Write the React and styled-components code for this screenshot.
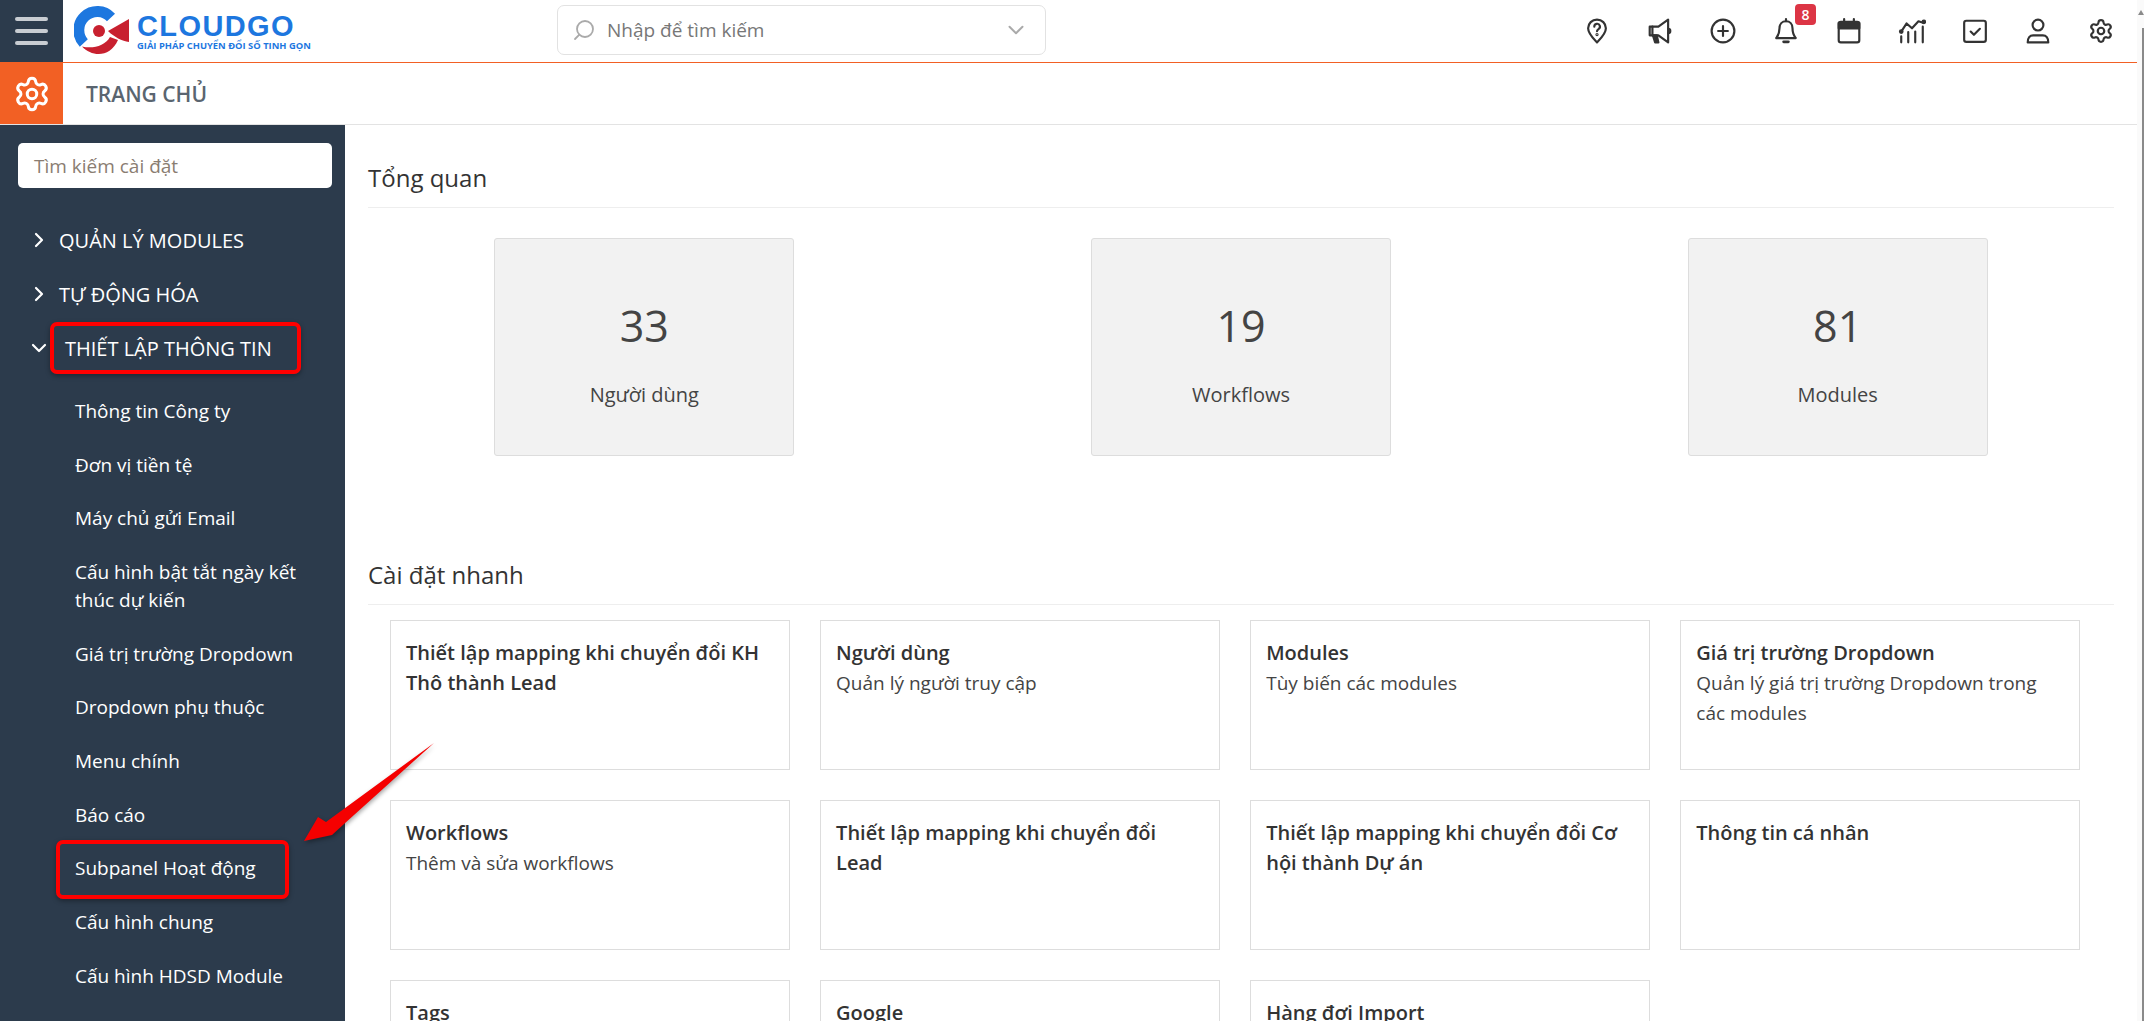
import React from "react";
import styled, { createGlobalStyle } from "styled-components";
import { Settings, ChevronRight, ChevronDown, Search } from "lucide-react";

const Global = createGlobalStyle`
  html, body { margin: 0; padding: 0; height: 100%; overflow: hidden; background: #fff; }
  body { font-family: "Open Sans", "Noto Sans", sans-serif; color: #333; }
  * { box-sizing: border-box; }
`;

const Page = styled.div`
  position: relative;
  display: flex;
  width: 2144px;
  height: 1021px;
  overflow: hidden;
  background: #fff;
`;
const Viewport = styled.div`
  width: 2137px;
  display: flex;
  flex-direction: column;
  overflow: hidden;
`;
const ScrollTrack = styled.div`
  position: relative;
  width: 7px;
  background: #fafafa;
  display: flex;
  justify-content: flex-end;
  padding-top: 28px;
`;
const ScrollThumb = styled.div`
  width: 2px;
  height: 100%;
  background: #8a8a8a;
`;
const ScrollArrow = styled.div`
  position: absolute;
  top: 10px;
  right: 0;
  width: 0;
  height: 0;
  border-left: 3px solid transparent;
  border-right: 3px solid transparent;
  border-bottom: 5px solid #8a8a8a;
`;

const Header = styled.header`
  display: flex;
  align-items: center;
  height: 63px;
  flex: none;
  border-bottom: 1px solid #f26024;
`;
const MenuButton = styled.div`
  width: 63px;
  height: 62px;
  background: #2c3b4c;
  display: flex;
  flex-direction: column;
  justify-content: center;
  gap: 8px;
  padding: 0 15px;
`;
const MenuLine = styled.span`
  height: 4px;
  border-radius: 2px;
  background: #c9cdd2;
`;
const Logo = styled.div`
  display: flex;
  align-items: center;
  gap: 7px;
  margin-left: 11px;
  width: 483px;
`;
const LogoText = styled.div`
  display: flex;
  flex-direction: column;
  color: #1d77df;
  margin-top: 2px;
`;
const LogoName = styled.span`
  font-family: "Liberation Sans", sans-serif;
  font-weight: 700;
  font-size: 29px;
  line-height: 27px;
  letter-spacing: 1.4px;
`;
const LogoTag = styled.span`
  font-family: "Open Sans", sans-serif;
  font-weight: 700;
  font-size: 9.4px;
  line-height: 12px;
  white-space: nowrap;
`;
const SearchBox = styled.div`
  width: 489px;
  height: 50px;
  margin-top: -2px;
  border: 1px solid #e2e2e2;
  border-radius: 7px;
  display: flex;
  align-items: center;
  padding: 0 16px 0 14px;
  color: #777;
  font-size: 19px;
  gap: 11px;
`;
const SearchLabel = styled.span`
  flex: 1;
`;
const IconBar = styled.div`
  margin-left: auto;
  display: flex;
  align-items: center;
  gap: 31px;
  padding-right: 20px;
  color: #333;
`;
const IconCell = styled.div`
  position: relative;
  width: 32px;
  height: 32px;
  display: flex;
  align-items: center;
  justify-content: center;
  margin-top: -1px;
`;
const Badge = styled.span`
  position: absolute;
  top: -11px;
  left: 25px;
  width: 21px;
  height: 21px;
  border-radius: 4px;
  background: #dc3545;
  color: #fff;
  font-size: 14px;
  font-weight: 600;
  display: flex;
  align-items: center;
  justify-content: center;
`;

const SubBar = styled.div`
  display: flex;
  align-items: center;
  height: 62px;
  flex: none;
  border-bottom: 1px solid #e3e3e3;
`;
const GearBlock = styled.div`
  width: 63px;
  height: 61px;
  background: #f26024;
  color: #fff;
  display: flex;
  align-items: center;
  justify-content: center;
`;
const Crumb = styled.div`
  margin-left: 23px;
  font-size: 21px;
  font-weight: 600;
  color: #5a6570;
`;

const Body = styled.div`
  display: flex;
  flex: 1;
  min-height: 0;
`;
const Sidebar = styled.aside`
  width: 345px;
  flex: none;
  background: #2c3b4c;
  padding: 18px 0 0;
  color: #fff;
  overflow: hidden;
`;
const SideSearch = styled.div`
  width: 314px;
  height: 45px;
  margin: 0 0 25px 18px;
  border-radius: 5px;
  background: #fff;
  color: #8a7d72;
  font-size: 19px;
  display: flex;
  align-items: center;
  padding-left: 16px;
`;
const MenuHead = styled.div`
  display: flex;
  align-items: center;
  height: 54px;
  font-size: 20px;
  padding-left: 28px;
  gap: 8px;
  white-space: nowrap;
`;
const SubList = styled.div`
  margin-top: 10px;
`;
const SubItem = styled.div`
  padding: 13px 20px 13px 75px;
  line-height: 27.7px;
  font-size: 19px;
`;
const RedBox = styled.span`
  display: inline-flex;
  align-items: center;
  border: 4px solid #ff0000;
  border-radius: 7px;
  height: ${(p) => p.$h}px;
  width: ${(p) => p.$w}px;
  padding-left: ${(p) => p.$pad}px;
  margin: ${(p) => p.$margin};
  box-shadow: 0 2px 5px rgba(0, 0, 0, 0.35);
  white-space: nowrap;
`;

const Main = styled.main`
  flex: 1;
  padding: 36px 23px 0;
  min-width: 0;
  overflow: hidden;
`;
const SectionTitle = styled.h3`
  margin: ${(p) => p.$top || 0}px 0 0;
  font-size: 24px;
  line-height: 34px;
  font-weight: 500;
  color: #333;
  padding-bottom: 12px;
  border-bottom: 1px solid #eee;
`;
const StatRow = styled.div`
  display: grid;
  grid-template-columns: repeat(3, 1fr);
  margin: 30px -22px 0;
  justify-items: center;
`;
const StatCard = styled.div`
  width: 300px;
  height: 218px;
  background: #f2f2f2;
  border: 1px solid #ddd;
  border-radius: 3px;
  display: flex;
  flex-direction: column;
  align-items: center;
  color: #444;
`;
const StatValue = styled.div`
  margin-top: 58px;
  font-size: 43px;
  line-height: 58px;
`;
const StatLabel = styled.div`
  margin-top: 26px;
  font-size: 20px;
  line-height: 28px;
`;
const QuickGrid = styled.div`
  display: grid;
  grid-template-columns: repeat(4, 399.5px);
  column-gap: 30.6px;
  row-gap: 30px;
  margin: 15px 0 0 22px;
`;
const QuickCard = styled.div`
  height: 150px;
  border: 1px solid #ddd;
  padding: 17px 15px;
`;
const QuickTitle = styled.div`
  font-size: 20px;
  font-weight: 600;
  line-height: 30px;
  color: #333;
`;
const QuickDesc = styled.div`
  font-size: 19px;
  line-height: 30px;
  color: #444;
`;

const Arrow = styled.svg`
  position: absolute;
  left: 295px;
  top: 735px;
  width: 150px;
  height: 115px;
  filter: drop-shadow(1px 2px 2px rgba(0, 0, 0, 0.35));
`;

const Stroke = ({ children, w = 26, h = 26, vb = "0 0 24 24", sw = 2 }) => (
  <svg width={w} height={h} viewBox={vb} fill="none" stroke="currentColor" strokeWidth={sw} strokeLinecap="round" strokeLinejoin="round">
    {children}
  </svg>
);

const PinIcon = () => (
  <Stroke>
    <path d="M12 1.5c-4.6 0-8.2 3.5-8.2 8 0 5 4.6 9.300 8.200 13 3.600-3.700 8.200-8 8.200-13 0-4.500-3.600-8-8.200-8z" />
    <path d="M9.500 8a2.600 2.600 0 1 1 3.900 2.200c-.9.600-1.400 1-1.400 2" />
    <circle cx="12" cy="15.300" r=".5" />
  </Stroke>
);
const MegaIcon = () => (
  <Stroke>
    <path d="M19.500 1.500v21L10.500 16H2.500V8h8z" />
    <path d="M5 8v8" />
    <path d="M19.500 10a2 2 0 0 1 2 2 2 2 0 0 1-2 2" />
    <path d="M5.500 16l2 6.500h3l-1.500-6.500z" fill="currentColor" />
  </Stroke>
);
const PlusIcon = () => (
  <Stroke>
    <circle cx="12" cy="12" r="10.500" />
    <path d="M12 7.500v9M7.500 12h9" />
  </Stroke>
);
const BellIcon = () => (
  <Stroke>
    <path d="M12 3c-3.600 0-6 2.800-6 6.500 0 5.500-1.800 7.500-3 9h18c-1.200-1.500-3-3.500-3-9C18 5.800 15.600 3 12 3z" />
    <path d="M12 1v2" />
    <path d="M9.800 22h4.400" strokeWidth="2.500" />
  </Stroke>
);
const CalIcon = () => (
  <Stroke>
    <rect x="2.500" y="3.500" width="19" height="19" rx="2" />
    <path d="M2.500 4.500h19v5h-19z" fill="currentColor" />
    <path d="M7.500 1v3M16.500 1v3" />
  </Stroke>
);
const TrendIcon = () => (
  <Stroke w={28} vb="0 0 26 24">
    <path d="M3 12.500L8 5l5 4.500 6-6.500 5 1.500" />
    <path d="M3 17v5.500M9.500 13v9.500M16 12.500v10M23 8v14.500" />
    <circle cx="3" cy="12.500" r="1.200" fill="currentColor" />
    <circle cx="24" cy="3.500" r="1.200" fill="currentColor" />
  </Stroke>
);
const CheckIcon = () => (
  <Stroke>
    <rect x="2" y="2.500" width="20" height="19.500" rx="2" />
    <path d="M8 12.500l3 3 5.500-5.500" />
  </Stroke>
);
const UserIcon = () => (
  <Stroke>
    <circle cx="12" cy="6.500" r="5" />
    <path d="M2.500 22.500c0-4 2-6.500 5-6.500h9c3 0 5 2.500 5 6.500z" />
  </Stroke>
);

const CloudgoMark = () => (
  <svg width="56" height="50" viewBox="0 0 56 50">
    <path d="M37 11.500A18.500 18.500 0 1 0 9.800 36.900" fill="none" stroke="#1d77df" strokeWidth="11" />
    <path d="M8 40.500C18 51 36 52 44 34l-8-3c-5 9-17 12-28 9.500z" fill="#c8202f" />
    <circle cx="25" cy="25" r="6" fill="#c8202f" />
    <path d="M34 25L55 13v23c-7-1-15-5-21-11z" fill="#c8202f" />
  </svg>
);

const headerIcons = [PinIcon, MegaIcon, PlusIcon, BellIcon, CalIcon, TrendIcon, CheckIcon, UserIcon];

const subBefore = [
  ["Thông tin Công ty"],
  ["Đơn vị tiền tệ"],
  ["Máy chủ gửi Email"],
  ["Cấu hình bật tắt ngày kết thúc dự kiến"],
  ["Giá trị trường Dropdown"],
  ["Dropdown phụ thuộc"],
  ["Menu chính"],
  ["Báo cáo"],
];

const stats = [
  ["33", "Người dùng"],
  ["19", "Workflows"],
  ["81", "Modules"],
];

const quick = [
  ["Thiết lập mapping khi chuyển đổi KH Thô thành Lead"],
  ["Người dùng", "Quản lý người truy cập"],
  ["Modules", "Tùy biến các modules"],
  ["Giá trị trường Dropdown", "Quản lý giá trị trường Dropdown trong các modules"],
  ["Workflows", "Thêm và sửa workflows"],
  ["Thiết lập mapping khi chuyển đổi Lead"],
  ["Thiết lập mapping khi chuyển đổi Cơ hội thành Dự án"],
  ["Thông tin cá nhân"],
  ["Tags"],
  ["Google"],
  ["Hàng đợi Import"],
];

export default function App() {
  return (
    <Page>
      <Global />
      <Viewport>
        <Header>
          <MenuButton>
            <MenuLine />
            <MenuLine />
            <MenuLine />
          </MenuButton>
          <Logo>
            <CloudgoMark />
            <LogoText>
              <LogoName>CLOUDGO</LogoName>
              <LogoTag>GIẢI PHÁP CHUYỂN ĐỔI SỐ TINH GỌN</LogoTag>
            </LogoText>
          </Logo>
          <SearchBox>
            <Search size={24} color="#aaa" strokeWidth={1.8} style={{ transform: "scaleX(-1)" }} />
            <SearchLabel>Nhập để tìm kiếm</SearchLabel>
            <ChevronDown size={26} color="#aaa" strokeWidth={1.8} />
          </SearchBox>
          <IconBar>
            {headerIcons.map((Icon, i) => (
              <IconCell key={i}>
                <Icon />
                {i === 3 && <Badge>8</Badge>}
              </IconCell>
            ))}
            <IconCell>
              <Settings size={26} strokeWidth={2} />
            </IconCell>
          </IconBar>
        </Header>
        <SubBar>
          <GearBlock>
            <Settings size={38} strokeWidth={1.9} />
          </GearBlock>
          <Crumb>TRANG CHỦ</Crumb>
        </SubBar>
        <Body>
          <Sidebar>
            <SideSearch>Tìm kiếm cài đặt</SideSearch>
            <MenuHead>
              <ChevronRight size={24} strokeWidth={2.2} style={{ margin: "0 0 0 -1px" }} />
              QUẢN LÝ MODULES
            </MenuHead>
            <MenuHead>
              <ChevronRight size={24} strokeWidth={2.2} style={{ margin: "0 0 0 -1px" }} />
              TỰ ĐỘNG HÓA
            </MenuHead>
            <MenuHead>
              <ChevronDown size={24} strokeWidth={2.2} style={{ margin: "0 -13px 0 -1px" }} />
              <RedBox $w={251} $h={52} $pad={11} $margin="0 0 0 4px">THIẾT LẬP THÔNG TIN</RedBox>
            </MenuHead>
            <SubList>
              {subBefore.map(([t]) => (
                <SubItem key={t}>{t}</SubItem>
              ))}
              <SubItem>
                <RedBox $w={233} $h={59} $pad={15} $margin="-16px 0 -16px -19px">Subpanel Hoạt động</RedBox>
              </SubItem>
              <SubItem>Cấu hình chung</SubItem>
              <SubItem>Cấu hình HDSD Module</SubItem>
            </SubList>
          </Sidebar>
          <Main>
            <SectionTitle>Tổng quan</SectionTitle>
            <StatRow>
              {stats.map(([v, l]) => (
                <StatCard key={l}>
                  <StatValue>{v}</StatValue>
                  <StatLabel>{l}</StatLabel>
                </StatCard>
              ))}
            </StatRow>
            <SectionTitle $top={102}>Cài đặt nhanh</SectionTitle>
            <QuickGrid>
              {quick.map(([t, d]) => (
                <QuickCard key={t}>
                  <QuickTitle>{t}</QuickTitle>
                  {d && <QuickDesc>{d}</QuickDesc>}
                </QuickCard>
              ))}
            </QuickGrid>
          </Main>
        </Body>
      </Viewport>
      <ScrollTrack>
        <ScrollArrow />
        <ScrollThumb />
      </ScrollTrack>
      <Arrow viewBox="295 735 150 115">
        <path d="M434 743L344 824 332 835 304 841 318 817 326 822z" fill="#f50000" />
      </Arrow>
    </Page>
  );
}
